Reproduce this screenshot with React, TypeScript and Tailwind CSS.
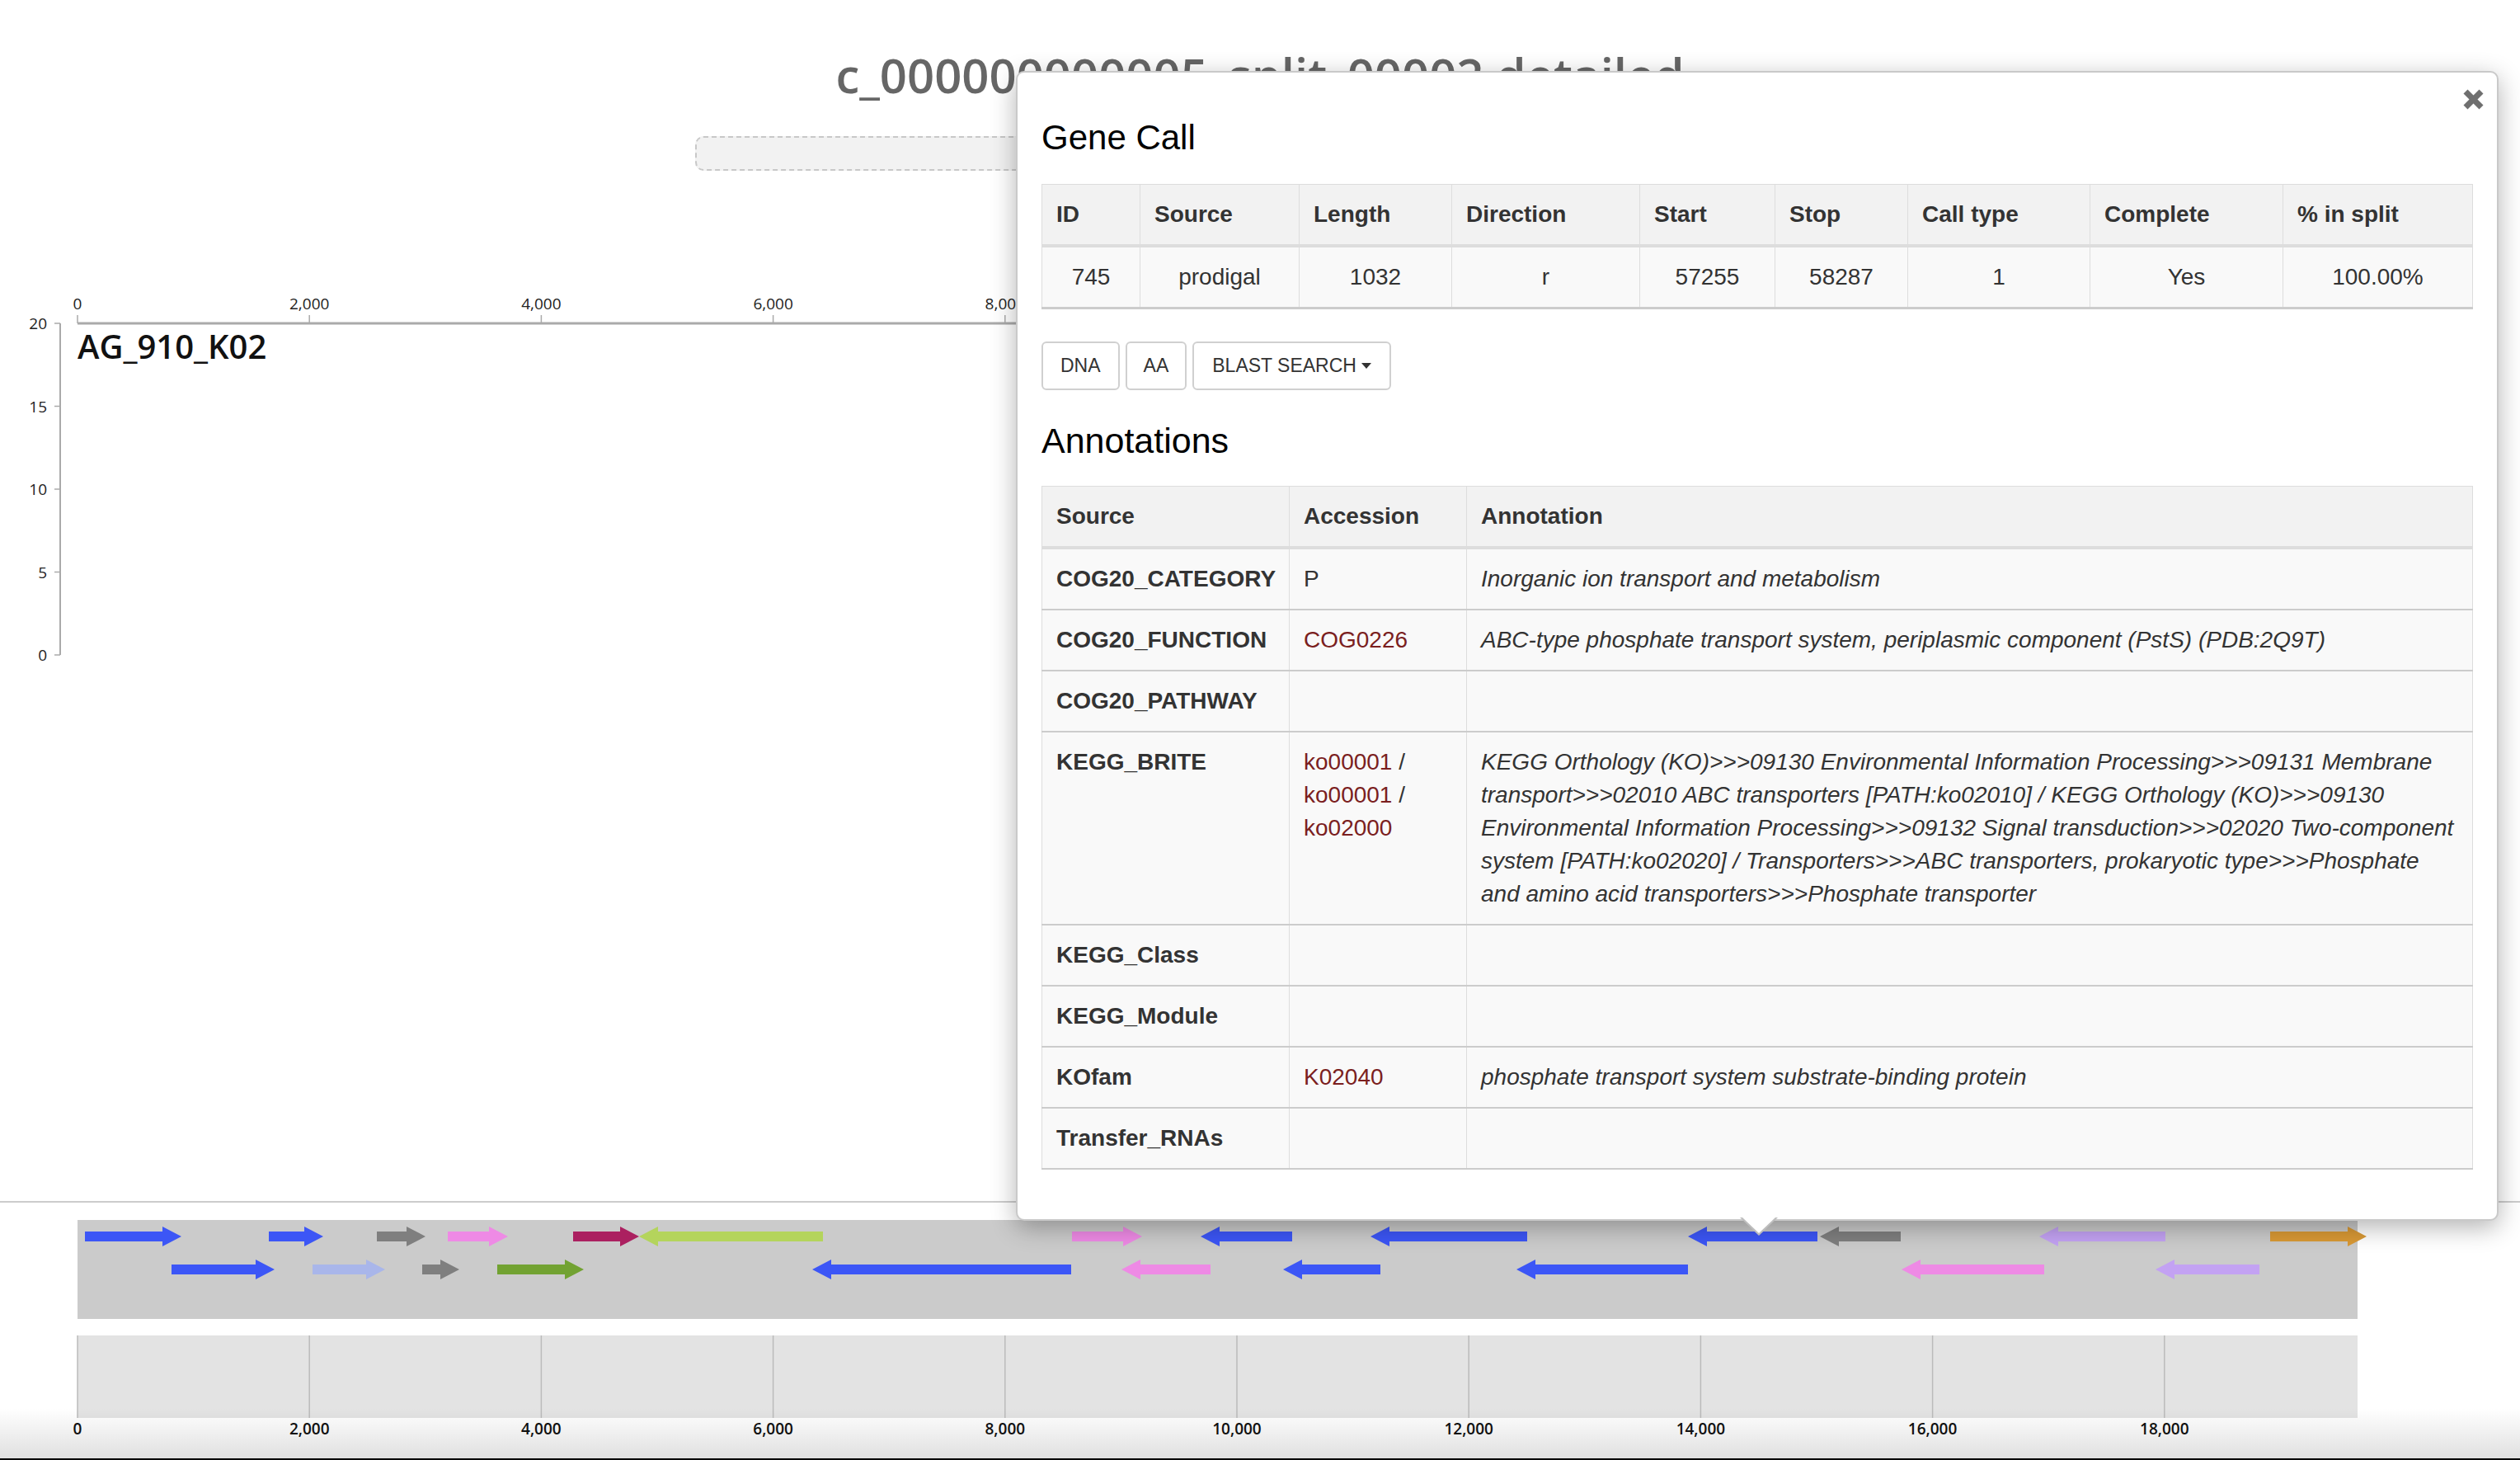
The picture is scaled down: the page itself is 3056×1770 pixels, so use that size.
const BLUE = "#3c56f6";
const GRAY = "#7f7f7f";
const PINK = "#ee8ae5";
const CRIMSON = "#ab2060";
const LIME = "#b4d45c";
const LIGHTBLUE = "#a9b6ea";
const OLIVE = "#72a232";
const LAVENDER = "#c3a2f3";
const ORANGE = "#d99935";

type Gene = [number, number, "l" | "r", string];

const row1: Gene[] = [
  [103, 220, "r", BLUE],
  [326, 392, "r", BLUE],
  [457, 516, "r", GRAY],
  [543, 616, "r", PINK],
  [695, 775, "r", CRIMSON],
  [775, 998, "l", LIME],
  [1300, 1385, "r", PINK],
  [1456, 1567, "l", BLUE],
  [1662, 1852, "l", BLUE],
  [2047, 2204, "l", BLUE],
  [2207, 2305, "l", GRAY],
  [2473, 2626, "l", LAVENDER],
  [2753, 2870, "r", ORANGE],
];

const row2: Gene[] = [
  [208, 333, "r", BLUE],
  [379, 467, "r", LIGHTBLUE],
  [512, 557, "r", GRAY],
  [603, 708, "r", OLIVE],
  [985, 1299, "l", BLUE],
  [1360, 1468, "l", PINK],
  [1556, 1674, "l", BLUE],
  [1839, 2047, "l", BLUE],
  [2306, 2479, "l", PINK],
  [2614, 2740, "l", LAVENDER],
];

const ticks = [0, 2000, 4000, 6000, 8000, 10000, 12000, 14000, 16000, 18000];
const tx = (v: number) => 94 + v * 0.1406;

function arrowPoints(x1: number, x2: number, dir: "l" | "r", cy: number) {
  const h = Math.min(23, x2 - x1);
  if (dir === "r") {
    return `${x1},${cy - 6} ${x2 - h},${cy - 6} ${x2 - h},${cy - 12} ${x2},${cy} ${x2 - h},${cy + 12} ${x2 - h},${cy + 6} ${x1},${cy + 6}`;
  }
  return `${x2},${cy - 6} ${x1 + h},${cy - 6} ${x1 + h},${cy - 12} ${x1},${cy} ${x1 + h},${cy + 12} ${x1 + h},${cy + 6} ${x2},${cy + 6}`;
}

function CoverageChart() {
  return (
    <svg width={3056} height={460} className="mt-[148px] block">
      {/* top ruler */}
      <line x1={94} y1={37} x2={2859} y2={37} stroke="#aaaaaa" strokeWidth={3} />
      {ticks.map((t) => (
        <g key={t}>
          <line x1={tx(t)} y1={27} x2={tx(t)} y2={37} stroke="#aaaaaa" strokeWidth={1.5} />
          <text x={tx(t)} y={20} textAnchor="middle" fontSize={19} fill="#222">
            {t.toLocaleString("en-US")}
          </text>
        </g>
      ))}
      {/* y axis */}
      <line x1={73} y1={37} x2={73} y2={439} stroke="#aaaaaa" strokeWidth={2} />
      {[20, 15, 10, 5, 0].map((v, i) => (
        <g key={v}>
          <line x1={66} y1={37 + i * 100.5} x2={73} y2={37 + i * 100.5} stroke="#aaaaaa" strokeWidth={1.5} />
          <text x={57} y={44 + i * 100.5} textAnchor="end" fontSize={19} fill="#222">
            {v}
          </text>
        </g>
      ))}
      <text x={94} y={80} fontSize={40} fontWeight={600} fill="#111">
        AG_910_K02
      </text>
    </svg>
  );
}

function GeneTrack() {
  return (
    <svg width={3056} height={120} className="block">
      <rect x={94} y={0} width={2765} height={120} fill="#cbcbcb" />
      {row1.map(([a, b, d, c], i) => (
        <polygon key={"a" + i} points={arrowPoints(a, b, d, 20)} fill={c} />
      ))}
      {row2.map(([a, b, d, c], i) => (
        <polygon key={"b" + i} points={arrowPoints(a, b, d, 60)} fill={c} />
      ))}
    </svg>
  );
}

function BottomAxis() {
  return (
    <svg width={3056} height={130} className="block">
      <rect x={94} y={0} width={2765} height={100} fill="#e3e3e3" />
      {ticks.map((t) => (
        <g key={t}>
          <line x1={tx(t)} y1={0} x2={tx(t)} y2={100} stroke="#bbbbbb" strokeWidth={1.5} />
          <text x={tx(t)} y={120} textAnchor="middle" fontSize={19} fontWeight={600} fill="#111">
            {t.toLocaleString("en-US")}
          </text>
        </g>
      ))}
    </svg>
  );
}

const geneCols = [119, 193, 185, 228, 164, 161, 221, 234, 230];
const geneHead = ["ID", "Source", "Length", "Direction", "Start", "Stop", "Call type", "Complete", "% in split"];
const geneRow = ["745", "prodigal", "1032", "r", "57255", "58287", "1", "Yes", "100.00%"];

function Link({ children }: { children: React.ReactNode }) {
  return <a className="text-[#7b1f1f]">{children}</a>;
}

const annoRows: { src: string; acc: React.ReactNode; text: React.ReactNode }[] = [
  { src: "COG20_CATEGORY", acc: "P", text: "Inorganic ion transport and metabolism" },
  {
    src: "COG20_FUNCTION",
    acc: <Link>COG0226</Link>,
    text: "ABC-type phosphate transport system, periplasmic component (PstS) (PDB:2Q9T)",
  },
  { src: "COG20_PATHWAY", acc: "", text: "" },
  {
    src: "KEGG_BRITE",
    acc: (
      <>
        <Link>ko00001</Link> /<br />
        <Link>ko00001</Link> /<br />
        <Link>ko02000</Link>
      </>
    ),
    text: (
      <>
        KEGG Orthology (KO)&gt;&gt;&gt;09130 Environmental Information Processing&gt;&gt;&gt;09131 Membrane
        <br />
        transport&gt;&gt;&gt;02010 ABC transporters [PATH:ko02010] / KEGG Orthology (KO)&gt;&gt;&gt;09130
        <br />
        Environmental Information Processing&gt;&gt;&gt;09132 Signal transduction&gt;&gt;&gt;02020 Two-component
        <br />
        system [PATH:ko02020] / Transporters&gt;&gt;&gt;ABC transporters, prokaryotic type&gt;&gt;&gt;Phosphate
        <br />
        and amino acid transporters&gt;&gt;&gt;Phosphate transporter
      </>
    ),
  },
  { src: "KEGG_Class", acc: "", text: "" },
  { src: "KEGG_Module", acc: "", text: "" },
  { src: "KOfam", acc: <Link>K02040</Link>, text: "phosphate transport system substrate-binding protein" },
  { src: "Transfer_RNAs", acc: "", text: "" },
];

function Popover() {
  return (
    <div className="absolute left-[1232px] top-[86px] z-10 w-[1798px] rounded-[10px] border-2 border-[#c9c9c9] bg-white px-[29px] pb-[60px] pt-[56px] font-['Liberation_Sans',Arial,sans-serif] shadow-[0_8px_30px_rgba(0,0,0,0.3)]">
      <svg width={25} height={25} className="absolute right-[16px] top-[20px]">
        <line x1={3} y1={3} x2={22} y2={22} stroke="#6f6f6f" strokeWidth={7} />
        <line x1={22} y1={3} x2={3} y2={22} stroke="#6f6f6f" strokeWidth={7} />
      </svg>

      <h4 className="text-[42px] leading-[46px] text-black">Gene Call</h4>

      <table className="mt-[33px] w-[1735px] table-fixed border-collapse text-[28px] leading-[40px] text-[#333]">
        <colgroup>
          {geneCols.map((w, i) => (
            <col key={i} style={{ width: w }} />
          ))}
        </colgroup>
        <thead>
          <tr className="bg-[#f2f2f2]">
            {geneHead.map((h) => (
              <th key={h} className="border border-b-4 border-[#dddddd] px-[17px] py-4 text-left font-bold">
                {h}
              </th>
            ))}
          </tr>
        </thead>
        <tbody>
          <tr className="bg-[#f9f9f9]">
            {geneRow.map((v, i) => (
              <td key={i} className="border border-b-[3px] border-[#dddddd] border-b-[#cccccc] px-[17px] py-4 text-center">
                {v}
              </td>
            ))}
          </tr>
        </tbody>
      </table>

      <div className="mt-[39px] flex gap-[7px] text-[23px] text-[#333]">
        <button className="h-[59px] rounded-[6px] border-2 border-[#d0d0d0] bg-white px-[21px]">DNA</button>
        <button className="h-[59px] rounded-[6px] border-2 border-[#d0d0d0] bg-white px-[20px]">AA</button>
        <button className="flex h-[59px] items-center rounded-[6px] border-2 border-[#d0d0d0] bg-white px-[22px]">
          BLAST SEARCH
          <svg width={12} height={7} className="ml-[6px]">
            <polygon points="0,0 12,0 6,7" fill="#333" />
          </svg>
        </button>
      </div>

      <h4 className="mt-[38px] text-[43px] leading-[46px] text-black">Annotations</h4>

      <table className="mt-[32px] w-[1735px] table-fixed border-collapse text-[28px] leading-[40px] text-[#333]">
        <colgroup>
          <col style={{ width: 300 }} />
          <col style={{ width: 215 }} />
          <col style={{ width: 1220 }} />
        </colgroup>
        <thead>
          <tr className="bg-[#f2f2f2]">
            {["Source", "Accession", "Annotation"].map((h) => (
              <th key={h} className="border border-b-4 border-[#dddddd] px-[17px] py-4 text-left font-bold">
                {h}
              </th>
            ))}
          </tr>
        </thead>
        <tbody>
          {annoRows.map((r) => (
            <tr key={r.src} className="bg-[#f9f9f9] align-top">
              <td className="border border-b-2 border-[#dddddd] border-b-[#cccccc] px-[17px] py-4 font-bold">
                {r.src}
              </td>
              <td className="border border-b-2 border-[#dddddd] border-b-[#cccccc] px-[17px] py-4">{r.acc}</td>
              <td className="whitespace-nowrap border border-b-2 border-[#dddddd] border-b-[#cccccc] px-[17px] py-4 italic">
                {r.text}
              </td>
            </tr>
          ))}
        </tbody>
      </table>

      <svg width={46} height={22} className="absolute bottom-[-20px] left-[876px]">
        <polygon points="0,0 46,0 23,22" fill="#bdbdbd" />
        <polygon points="3,0 43,0 23,19" fill="#ffffff" />
      </svg>
    </div>
  );
}

export default function App() {
  return (
    <div className="relative h-[1770px] w-[3056px] overflow-hidden bg-white font-['Open_Sans',sans-serif]">
      <div className="pt-[62px]">
        <h1 className="text-center text-[58px] font-semibold leading-none text-[#666666]">
          c_000000000005_split_00002 detailed
        </h1>
        <div className="mx-auto mt-[45px] h-[42px] w-[1370px] rounded-[10px] border-2 border-dashed border-[#c8c8c8] bg-[#f2f2f2]" />
        <CoverageChart />
        <div className="mt-[641px] h-[2px] bg-[#cccccc]" />
        <div className="mt-[21px]">
          <GeneTrack />
        </div>
        <div className="mt-[20px]">
          <BottomAxis />
        </div>
      </div>

      <Popover />

      <div className="pointer-events-none absolute inset-x-0 bottom-0 h-[63px] border-b-2 border-black bg-linear-to-b from-[rgba(0,0,0,0)] to-[rgba(0,0,0,0.12)]" />
    </div>
  );
}
